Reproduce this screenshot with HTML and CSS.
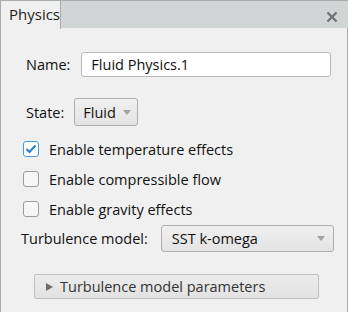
FILE: index.html
```html
<!DOCTYPE html>
<html>
<head>
<meta charset="utf-8">
<link rel="stylesheet" href="styles.css">
</head>
<body>
<div class="win">
  <div class="tabbar">
    <div class="tab">Physics</div>
    <div class="close"><svg width="12" height="12" viewBox="0 0 12 12"><path d="M1.5 1.5 L10.5 10.5 M10.5 1.5 L1.5 10.5" stroke="#6f7272" stroke-width="2.2" stroke-linecap="butt"/></svg></div>
  </div>
  <div class="panel">
    <div class="row name-row">
      <span class="label">Name:</span>
      <div class="input">Fluid Physics.1</div>
    </div>
    <div class="row state-row">
      <span class="label">State:</span>
      <div class="btn state-btn">Fluid <span class="arrow"></span></div>
    </div>
    <div class="checks">
      <div class="check"><span class="box on"><svg width="12" height="10" viewBox="0 0 12 10"><path d="M1.5 5 L4.5 8 L10.5 1.5" fill="none" stroke="#2d7fd2" stroke-width="2.2"/></svg></span>Enable temperature effects</div>
      <div class="check"><span class="box"></span>Enable compressible flow</div>
      <div class="check"><span class="box"></span>Enable gravity effects</div>
    </div>
    <div class="row turb-row">
      <span class="label">Turbulence model:</span>
      <div class="btn combo">SST k-omega <span class="arrow"></span></div>
    </div>
    <div class="expander"><span class="tri"></span>Turbulence model parameters</div>
  </div>
</div>
</body>
</html>
```
FILE: styles.css
```css
html, body { margin: 0; padding: 0; }
body {
  width: 348px; height: 312px; overflow: hidden;
  font-family: "Open Sans", "Noto Sans", sans-serif;
  font-size: 14.5px; color: #111;
  background: #f0f0f0;
}
.win { width: 348px; height: 312px; box-sizing: border-box; }
.tabbar {
  height: 28px; box-sizing: border-box;
  background: #d2d5d5; border-top: 1px solid #a9acac;
  display: flex; align-items: stretch; justify-content: space-between;
}
.tab {
  width: 61px; box-sizing: border-box; background: #f0f0f0;
  border-left: 1px solid #a9acac; border-right: 1px solid #a9acac;
  margin-bottom: -1px;
  padding: 3px 0 0 8px; font-size: 15px; color: #1c1c1c;
}
.close { padding: 7px 10px 0 0; }
.panel {
  height: 284px; box-sizing: border-box;
  border-left: 1px solid #a9acac; border-right: 1px solid #a9acac;
  padding: 24px 0 0 0;
}
.row { display: flex; align-items: center; }
.name-row { padding-left: 25px; gap: 11px; }
.input {
  width: 250px; height: 25px; box-sizing: border-box;
  background: #fff; border: 1px solid #b9b9b9; border-radius: 3px;
  padding: 1px 0 0 9px; line-height: 21px;
}
.state-row { padding-left: 25px; gap: 10px; margin-top: 21px; }
.btn {
  box-sizing: border-box; height: 28px;
  border: 1px solid #afafaf; border-radius: 3px;
  background: linear-gradient(#f0f0f0, #e3e3e3);
  display: flex; align-items: center; justify-content: space-between;
}
.state-btn { width: 64px; padding: 0 6px 0 8px; }
.arrow {
  width: 0; height: 0;
  border-left: 4px solid transparent; border-right: 4px solid transparent;
  border-top: 5px solid #a3a3a3;
}
.checks { margin-top: 8px; padding-left: 22px; }
.check { display: flex; align-items: center; height: 30px; gap: 10px; }
.box {
  width: 16px; height: 16px; box-sizing: border-box;
  border: 1px solid #9c9c9c; border-radius: 3px; background: #f6f6f6;
  display: flex; align-items: center; justify-content: center;
}
.box.on { border-color: #4b97dd; background: #fff; }
.turb-row { padding-left: 20px; gap: 13px; margin-top: 1px; }
.combo { width: 173px; height: 27px; padding: 0 8px 0 10px; }
.expander {
  margin: 22px 0 0 33px; width: 285px; height: 25px; box-sizing: border-box;
  border: 1px solid #c0c0c0; border-radius: 2px;
  background: linear-gradient(#ececec, #e2e2e2);
  display: flex; align-items: center; padding-left: 11px; gap: 7px;
  color: #333;
}
.tri {
  width: 0; height: 0;
  border-top: 4.5px solid transparent; border-bottom: 4.5px solid transparent;
  border-left: 7px solid #6d6d6d;
}
```
